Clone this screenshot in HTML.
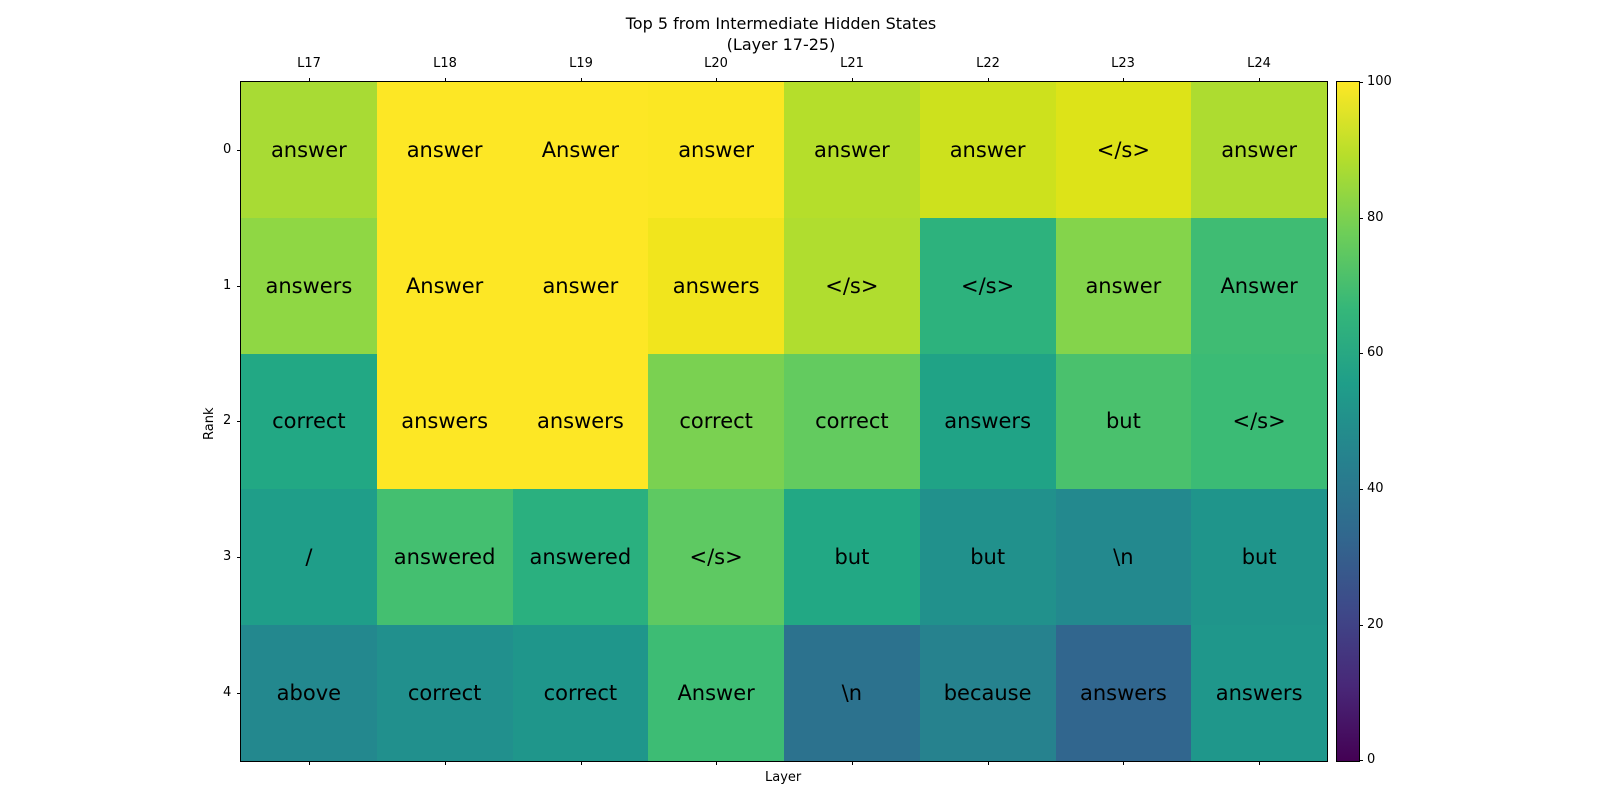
<!DOCTYPE html>
<html><head><style>
body{margin:0;width:1600px;height:800px;background:#fff;font-family:"DejaVu Sans","Liberation Sans",sans-serif;position:relative;overflow:hidden}
.a{position:absolute}
.t{font-size:16px;color:#000;text-align:center;width:600px;left:481px;line-height:21px}
.grid{position:absolute;left:241px;top:82px;width:1086px;height:679px;display:grid;grid-template-columns:repeat(8,1fr);grid-template-rows:repeat(5,1fr);outline:1.5px solid #000}
.grid div{display:flex;align-items:center;justify-content:center;font-size:21px;color:#000}
.tk{font-size:13px;color:#000}
.tc{width:60px;text-align:center;margin-left:-30px}
.cb{position:absolute;left:1337px;top:82px;width:22px;height:679px;background:linear-gradient(to top,#440154,#482878,#3e4989,#31688e,#26828e,#1f9e89,#35b779,#6ece58,#b5de2b,#fde725);outline:1.5px solid #000}
</style></head><body>
<div class="a t" style="top:13px">Top 5 from Intermediate Hidden States<br>(Layer 17-25)</div>
<div class="grid">
<div style="background:#a8db34">answer</div><div style="background:#fde725">answer</div><div style="background:#fde725">Answer</div><div style="background:#fbe723">answer</div><div style="background:#b5de2b">answer</div><div style="background:#cde11d">answer</div><div style="background:#dde318">&lt;/s&gt;</div><div style="background:#addc30">answer</div>
<div style="background:#8fd744">answers</div><div style="background:#fde725">Answer</div><div style="background:#fde725">answer</div><div style="background:#f1e51d">answers</div><div style="background:#b0dd2f">&lt;/s&gt;</div><div style="background:#2db27d">&lt;/s&gt;</div><div style="background:#84d44b">answer</div><div style="background:#3fbc73">Answer</div>
<div style="background:#22a884">correct</div><div style="background:#fde725">answers</div><div style="background:#fde725">answers</div><div style="background:#7ad151">correct</div><div style="background:#63cb5f">correct</div><div style="background:#20a386">answers</div><div style="background:#4ac16d">but</div><div style="background:#3bbb75">&lt;/s&gt;</div>
<div style="background:#1f9e89">/</div><div style="background:#44bf70">answered</div><div style="background:#2ab07f">answered</div><div style="background:#5ec962">&lt;/s&gt;</div><div style="background:#22a884">but</div><div style="background:#21918c">but</div><div style="background:#23898e">\n</div><div style="background:#1f958b">but</div>
<div style="background:#23888e">above</div><div style="background:#21908d">correct</div><div style="background:#1f968b">correct</div><div style="background:#3dbc74">Answer</div><div style="background:#2c728e">\n</div><div style="background:#26828e">because</div><div style="background:#31668e">answers</div><div style="background:#1f978b">answers</div>
</div>
<div class="a tk tc" style="top:56px;left:309px">L17</div>
<div class="a tk tc" style="top:56px;left:445px">L18</div>
<div class="a tk tc" style="top:56px;left:581px">L19</div>
<div class="a tk tc" style="top:56px;left:716px">L20</div>
<div class="a tk tc" style="top:56px;left:852px">L21</div>
<div class="a tk tc" style="top:56px;left:988px">L22</div>
<div class="a tk tc" style="top:56px;left:1123px">L23</div>
<div class="a tk tc" style="top:56px;left:1259px">L24</div>
<svg class="a" style="left:0;top:0" width="1600" height="800">
<g stroke="#000" stroke-width="1">
<line x1="309.5" y1="78" x2="309.5" y2="82"/><line x1="445.5" y1="78" x2="445.5" y2="82"/><line x1="581.5" y1="78" x2="581.5" y2="82"/><line x1="716.5" y1="78" x2="716.5" y2="82"/><line x1="852.5" y1="78" x2="852.5" y2="82"/><line x1="988.5" y1="78" x2="988.5" y2="82"/><line x1="1123.5" y1="78" x2="1123.5" y2="82"/><line x1="1259.5" y1="78" x2="1259.5" y2="82"/>
<line x1="309.5" y1="761" x2="309.5" y2="765"/><line x1="445.5" y1="761" x2="445.5" y2="765"/><line x1="581.5" y1="761" x2="581.5" y2="765"/><line x1="716.5" y1="761" x2="716.5" y2="765"/><line x1="852.5" y1="761" x2="852.5" y2="765"/><line x1="988.5" y1="761" x2="988.5" y2="765"/><line x1="1123.5" y1="761" x2="1123.5" y2="765"/><line x1="1259.5" y1="761" x2="1259.5" y2="765"/>
<line x1="237" y1="150.5" x2="241" y2="150.5"/><line x1="237" y1="286.5" x2="241" y2="286.5"/><line x1="237" y1="421.5" x2="241" y2="421.5"/><line x1="237" y1="557.5" x2="241" y2="557.5"/><line x1="237" y1="693.5" x2="241" y2="693.5"/>
<line x1="1359" y1="82.5" x2="1363" y2="82.5"/><line x1="1359" y1="218.5" x2="1363" y2="218.5"/><line x1="1359" y1="353.5" x2="1363" y2="353.5"/><line x1="1359" y1="489.5" x2="1363" y2="489.5"/><line x1="1359" y1="625.5" x2="1363" y2="625.5"/><line x1="1359" y1="760.5" x2="1363" y2="760.5"/>
</g></svg>
<div class="a tk" style="top:142px;left:223px">0</div>
<div class="a tk" style="top:278px;left:223px">1</div>
<div class="a tk" style="top:413px;left:223px">2</div>
<div class="a tk" style="top:549px;left:223px">3</div>
<div class="a tk" style="top:685px;left:223px">4</div>
<div class="a tk" style="top:440px;left:202px;transform:rotate(-90deg);transform-origin:left top">Rank</div>
<div class="a tk" style="top:770px;left:765px">Layer</div>
<div class="cb"></div>
<div class="a tk" style="top:74px;left:1367px">100</div>
<div class="a tk" style="top:210px;left:1367px">80</div>
<div class="a tk" style="top:345px;left:1367px">60</div>
<div class="a tk" style="top:481px;left:1367px">40</div>
<div class="a tk" style="top:617px;left:1367px">20</div>
<div class="a tk" style="top:752px;left:1367px">0</div>
</body></html>
